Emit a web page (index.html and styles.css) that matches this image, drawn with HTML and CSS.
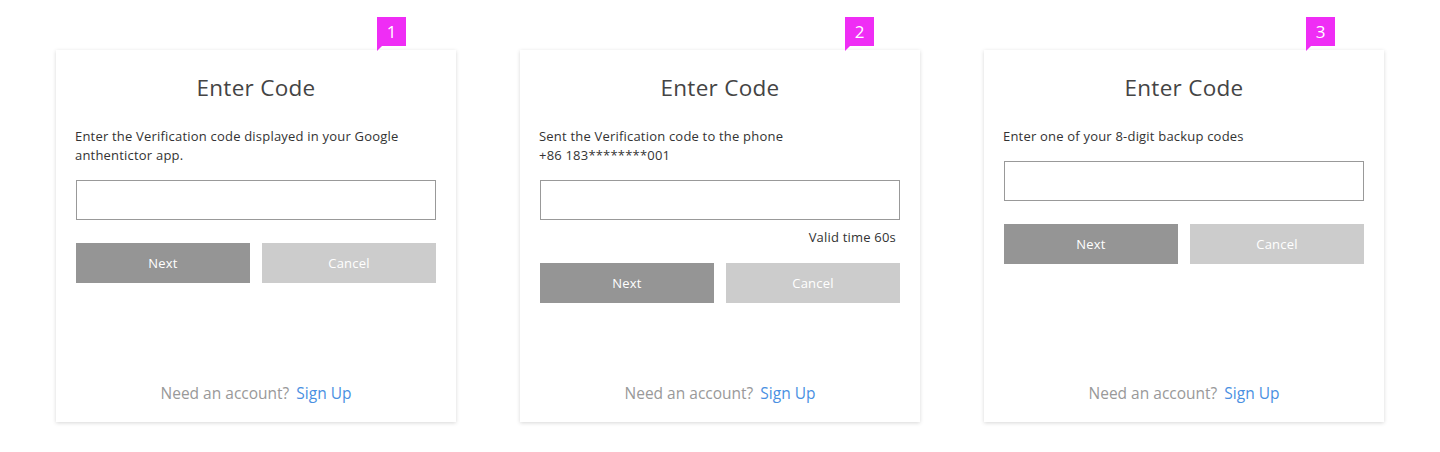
FILE: index.html
```html
<!DOCTYPE html>
<html lang="en">
<head>
<meta charset="utf-8">
<title>Enter Code</title>
<link rel="stylesheet" href="styles.css">
</head>
<body>
<main class="cards">
  <section class="card">
    <span class="badge badge-1">1</span>
    <h1 class="title">Enter Code</h1>
    <p class="desc">Enter the Verification code displayed in your Google anthentictor app.</p>
    <input class="code-input" type="text" aria-label="Verification code">
    <div class="actions">
      <button class="btn btn-next">Next</button>
      <button class="btn btn-cancel">Cancel</button>
    </div>
    <p class="footer">Need an account? <a class="link" href="#">Sign Up</a></p>
  </section>
  <section class="card">
    <span class="badge badge-2">2</span>
    <h1 class="title">Enter Code</h1>
    <p class="desc">Sent the Verification code to the phone<br>+86 183********001</p>
    <input class="code-input" type="text" aria-label="Verification code">
    <p class="valid">Valid time 60s</p>
    <div class="actions actions-tight">
      <button class="btn btn-next">Next</button>
      <button class="btn btn-cancel">Cancel</button>
    </div>
    <p class="footer">Need an account? <a class="link" href="#">Sign Up</a></p>
  </section>
  <section class="card">
    <span class="badge badge-3">3</span>
    <h1 class="title">Enter Code</h1>
    <p class="desc">Enter one of your 8-digit backup codes</p>
    <input class="code-input" type="text" aria-label="Backup code">
    <div class="actions">
      <button class="btn btn-next">Next</button>
      <button class="btn btn-cancel">Cancel</button>
    </div>
    <p class="footer">Need an account? <a class="link" href="#">Sign Up</a></p>
  </section>
</main>
</body>
</html>
```
FILE: styles.css
```css
* { box-sizing: border-box; }
html, body { margin: 0; padding: 0; background: #fff; }
body {
  font-family: "Open Sans", "Noto Sans", sans-serif;
  color: #333;
  height: 452px;
}
.cards {
  display: flex;
  gap: 64px;
  padding: 50px 0 0 56px;
}
.card {
  position: relative;
  width: 400px;
  height: 372px;
  background: #fff;
  box-shadow: 0 1px 4px rgba(0, 0, 0, 0.16);
  display: flex;
  flex-direction: column;
  padding: 0 20px 18px;
}
.badge {
  position: absolute;
  top: -33px;
  width: 29px;
  height: 29px;
  background: #ef2df5;
  color: #fff;
  font-size: 17px;
  line-height: 29px;
  text-align: center;
}
.badge::after {
  content: "";
  position: absolute;
  left: 0;
  top: 29px;
  border-top: 5px solid #ef2df5;
  border-right: 5px solid transparent;
}
.badge-1 { left: 321px; }
.badge-2 { left: 325px; }
.badge-3 { left: 322px; }
.title {
  margin: 22px 0 0;
  font-size: 22.5px;
  font-weight: 400;
  line-height: 32px;
  text-align: center;
  color: #444;
  letter-spacing: 0.3px;
}
.desc {
  margin: 23px 0 0 -1px;
  font-size: 13px;
  line-height: 19px;
  letter-spacing: 0.2px;
  color: #333;
}
.code-input {
  display: block;
  margin-top: 15px;
  width: 360px;
  height: 40px;
  border: 1px solid #999;
  border-radius: 0;
  background: #fff;
  padding: 0 10px;
  font: inherit;
}
.valid {
  margin: 7px 4px 0 0;
  font-size: 13px;
  line-height: 20px;
  letter-spacing: 0.2px;
  text-align: right;
  color: #333;
}
.actions {
  display: flex;
  gap: 12px;
  margin-top: 23px;
}
.actions-tight { margin-top: 16px; }
.btn {
  flex: 1;
  height: 40px;
  border: 0;
  border-radius: 0;
  color: #fff;
  font-family: inherit;
  font-size: 13px;
  letter-spacing: 0.2px;
  cursor: pointer;
}
.btn-next { background: #959595; }
.btn-cancel { background: #cccccc; }
.footer {
  margin: auto 0 0;
  text-align: center;
  font-size: 15.5px;
  line-height: 22px;
  color: #999;
}
.link {
  color: #4a90e2;
  text-decoration: none;
  margin-left: 3px;
}
```
